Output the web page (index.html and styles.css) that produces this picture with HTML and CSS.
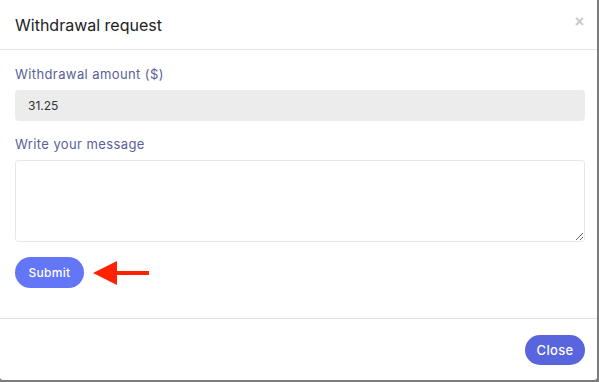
FILE: index.html
```html
<!DOCTYPE html>
<html>
<head>
  <title>Withdrawal request</title>
  <link rel="stylesheet" href="styles.css">
</head>
<body>
  <div class="modal">
    <div class="modal-header">
      <h5 class="modal-title">Withdrawal request</h5>
      <button type="button" class="close-x" aria-label="Close">&times;</button>
    </div>

    <div class="modal-body">
      <form>
        <label class="field-label" for="amount">Withdrawal amount ($)</label>
        <input type="text" id="amount" class="field-input" value="31.25" readonly>

        <label class="field-label" for="message">Write your message</label>
        <textarea id="message" class="field-textarea"></textarea>

        <div class="submit-row">
          <button type="submit" class="btn btn-submit">Submit</button>
          <svg class="arrow" width="56" height="24" viewBox="0 0 56 24">
            <path d="M0 12 L24 0 L24 24 Z" fill="#ff2200"/>
            <rect x="22" y="10" width="34" height="4" fill="#ff2200"/>
          </svg>
        </div>
      </form>
    </div>

    <div class="modal-footer">
      <button type="button" class="btn btn-close">Close</button>
    </div>
  </div>
</body>
</html>
```

FILE: styles.css
```css
body {
  margin: 0;
  background: #7d7d7d;
  font-family: 'Inter', 'Liberation Sans', sans-serif;
  color: #2b2b2b;
}

.modal {
  width: 597px;
  height: 380px;
  background: #ffffff;
  border-radius: 0 0 3px 3px;
  display: flex;
  flex-direction: column;
}

.modal-header {
  height: 50px;
  box-sizing: border-box;
  padding: 0 15px;
  display: flex;
  align-items: center;
  justify-content: space-between;
  border-bottom: 1px solid #e8e7f1;
}

.modal-title {
  margin: 0;
  font-size: 16px;
  font-weight: 400;
  color: #222;
}

.close-x {
  border: none;
  background: none;
  padding: 0;
  margin-top: -6px;
  margin-right: -2px;
  font-size: 16px;
  font-weight: bold;
  color: #c8c8c8;
  cursor: pointer;
}

.modal-body {
  padding: 15px 12px 30px 15px;
}

.modal-body form {
  display: flex;
  flex-direction: column;
}

.field-label {
  font-size: 13px;
  letter-spacing: 0.4px;
  color: #5a5f97;
  line-height: 18px;
  margin-bottom: 7px;
}

.field-input {
  height: 31px;
  box-sizing: border-box;
  border: none;
  border-radius: 4px;
  background: #ececec;
  padding: 0 13px;
  font-family: inherit;
  font-size: 12px;
  color: #333;
  margin-bottom: 14px;
}

.field-textarea {
  height: 82px;
  box-sizing: border-box;
  border: 1px solid #e6e6ee;
  border-radius: 3px;
  font-family: inherit;
  margin: 0 0 15px;
}

.submit-row {
  display: flex;
  align-items: center;
  gap: 9px;
}

.btn {
  border: none;
  border-radius: 16px;
  height: 31px;
  font-family: inherit;
  font-size: 12px;
  font-weight: 500;
  letter-spacing: 0.3px;
  color: #fff;
  cursor: pointer;
}

.btn-submit {
  width: 69px;
  background: #6276f6;
}

.modal-footer {
  margin-top: auto;
  height: 62px;
  box-sizing: border-box;
  border-top: 1px solid #e2e2e2;
  display: flex;
  align-items: center;
  justify-content: flex-end;
  padding: 0 12px 0 0;
}

.btn-close {
  width: 60px;
  height: 30px;
  background: #5865dc;
  font-size: 13px;
}
```
